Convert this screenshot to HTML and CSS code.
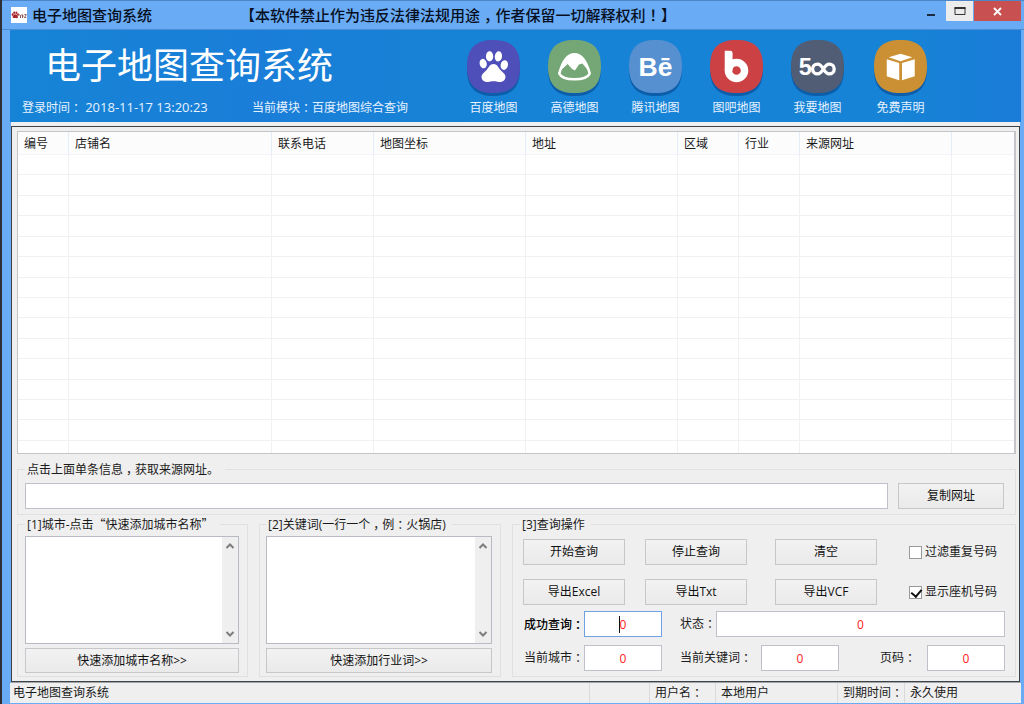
FILE: index.html
```html
<!DOCTYPE html>
<html lang="zh-CN">
<head>
<meta charset="utf-8">
<title>电子地图查询系统</title>
<link rel="stylesheet" href="styles.css">
</head>
<body>
<div class="window">
  <header class="titlebar">
    <svg class="app-icon" viewBox="0 0 16 16" aria-hidden="true">
      <rect width="16" height="16" fill="#fff"/>
      <g fill="#a8262b"><ellipse cx="1.600" cy="7.600" rx="1" ry="1.400"/><ellipse cx="3.200" cy="5.800" rx="1" ry="1.200"/><ellipse cx="5.400" cy="5.800" rx="1" ry="1.200"/><ellipse cx="7" cy="7.600" rx=".9" ry="1.300"/><path d="M4.300 7.300c1.600 0 3 2 2.600 3.200-.5 1-1.500.5-2.600.5s-2.200.4-2.600-.5C1.300 9.300 2.800 7.300 4.300 7.300z"/></g>
      <path d="M8.500 7.500l1 1.500 1-1.500M9.500 9v2M11.500 7.500V11M11.500 9h1.300M13.500 7.500h1.800l-1.800 3h1.800" fill="none" stroke="#8c4a45" stroke-width=".9"/>
    </svg>
    <span class="titlebar-name">电子地图查询系统</span>
    <span class="titlebar-note">【本软件禁止作为违反法律法规用途<span class="mid">，</span>作者保留一切解释权利<span class="mid">！</span>】</span>
    <div class="window-buttons">
      <button class="win-btn win-min" aria-label="最小化"><svg width="10" height="10" viewBox="0 0 10 10"><rect x="1" y="5" width="8" height="2" fill="#1c2b40"/></svg></button>
      <button class="win-btn win-max" aria-label="最大化"><svg width="12" height="10" viewBox="0 0 12 10"><path d="M1 1.500h10v7H1z" fill="none" stroke="#333" /><path d="M.5 1h11v2H.5z" fill="#333"/></svg></button>
      <button class="win-btn win-close" aria-label="关闭"><svg width="9" height="9" viewBox="0 0 9 9"><path d="M1 1l7 7M8 1L1 8" stroke="#fff" stroke-width="1.800"/></svg></button>
    </div>
  </header>

  <section class="banner">
    <div class="banner-info">
      <h1>电子地图查询系统</h1>
      <div class="banner-meta">
        <span class="meta-time">登录时间<span class="mid">：</span> <time>2018-11-17 13:20:23</time></span>
        <span>当前模块<span class="mid">：</span>百度地图综合查询</span>
      </div>
    </div>
    <nav class="modules">
      <button class="module">
        <svg viewBox="0 0 54 57" aria-hidden="true"><use href="#tile" y="3" fill="#0a4f97" opacity=".7"/><g fill="#4f4fb9"><use href="#tile"/></g>
          <defs><path id="tile" d="M27 0C45 0 54 8 54 27S45 54 27 54 0 46 0 27 9 0 27 0z"/></defs>
          <g fill="#fff"><ellipse cx="16.500" cy="24" rx="3.600" ry="4.900" transform="rotate(-14 16.500 24)"/><ellipse cx="23" cy="16.700" rx="3.700" ry="5.200"/><ellipse cx="32" cy="16.700" rx="3.700" ry="5.200" transform="rotate(8 32 16.700)"/><ellipse cx="38" cy="25.500" rx="3.700" ry="5" transform="rotate(14 38 25.500)"/><path d="M27 24.500c3.500 0 4.500 3 7 6 3 3 6 4.500 5 8.500-1 4-5 4-8 3.400-3-.6-5-.6-8 0-3.500.7-7 .4-8-3.400-.8-4 2-5.500 5-8.500 2.500-3 3.500-6 7-6z"/></g>
        </svg><span>百度地图</span></button>
      <button class="module">
        <svg viewBox="0 0 54 57" aria-hidden="true"><use href="#tile" y="3" fill="#0a4f97" opacity=".7"/><g fill="#75a676"><use href="#tile"/></g>
          <path d="M11.500 34C14 25 19 14.500 27 14.500S40 25 42.500 34C39 42 15 42 11.500 34z" fill="none" stroke="#fff" stroke-width="2.600" stroke-linejoin="round"/><path d="M13 31c4-11 8-16.500 14-16.500S37 20 41 31l-6-7-3.500 1-4 6-3-1.500-4.500-5z" fill="#fff"/>
        </svg><span>高德地图</span></button>
      <button class="module">
        <svg viewBox="0 0 54 57" aria-hidden="true"><use href="#tile" y="3" fill="#0a4f97" opacity=".7"/><g fill="#5690d0"><use href="#tile"/></g>
          <text x="27" y="37" text-anchor="middle" class="logo-text logo-be">Bē</text>
        </svg><span>腾讯地图</span></button>
      <button class="module">
        <svg viewBox="0 0 54 57" aria-hidden="true"><use href="#tile" y="3" fill="#0a4f97" opacity=".7"/><g fill="#cc4144"><use href="#tile"/></g>
          <path d="M15 11h5.500q2.500 0 2.500 2.500V31h-8z" fill="#fff"/><circle cx="27" cy="31" r="8.200" fill="none" stroke="#fff" stroke-width="7.600"/>
        </svg><span>图吧地图</span></button>
      <button class="module">
        <svg viewBox="0 0 54 57" aria-hidden="true"><use href="#tile" y="3" fill="#0a4f97" opacity=".7"/><g fill="#505d74"><use href="#tile"/></g>
          <text x="8" y="36" class="logo-text logo-five">5</text><path d="M33 29.500c-2-3.500-4-5-6-5a5 5 0 0 0 0 10c2 0 4-1.500 6-5s4-5 6-5a5 5 0 0 1 0 10c-2 0-4-1.500-6-5z" fill="none" stroke="#fff" stroke-width="3.400"/>
        </svg><span>我要地图</span></button>
      <button class="module module-notice">
        <svg viewBox="0 0 54 57" aria-hidden="true"><use href="#tile" y="3" fill="#0a4f97" opacity=".7"/><g fill="#cb9033"><use href="#tile"/></g>
          <g fill="#fff"><path d="M27 14l12 3.500L27 21.500 15 17.500z"/><path d="M13 19.500l12.700 4V41L13 37z"/><path d="M41.500 19.500l-13 4V41l13-4z"/></g>
        </svg><span>免费声明</span></button>
    </nav>
  </section>

  <main class="panel">
    <div class="list">
      <table>
        <colgroup><col class="c-no"><col class="c-shop"><col class="c-tel"><col class="c-wide"><col class="c-wide"><col class="c-small"><col class="c-small"><col class="c-wide"><col></colgroup>
        <thead><tr><th>编号</th><th>店铺名</th><th>联系电话</th><th>地图坐标</th><th>地址</th><th>区域</th><th>行业</th><th>来源网址</th><th></th></tr></thead>
        <tbody>
          <tr><td></td><td></td><td></td><td></td><td></td><td></td><td></td><td></td><td></td></tr>
          <tr><td></td><td></td><td></td><td></td><td></td><td></td><td></td><td></td><td></td></tr>
          <tr><td></td><td></td><td></td><td></td><td></td><td></td><td></td><td></td><td></td></tr>
          <tr><td></td><td></td><td></td><td></td><td></td><td></td><td></td><td></td><td></td></tr>
          <tr><td></td><td></td><td></td><td></td><td></td><td></td><td></td><td></td><td></td></tr>
          <tr><td></td><td></td><td></td><td></td><td></td><td></td><td></td><td></td><td></td></tr>
          <tr><td></td><td></td><td></td><td></td><td></td><td></td><td></td><td></td><td></td></tr>
          <tr><td></td><td></td><td></td><td></td><td></td><td></td><td></td><td></td><td></td></tr>
          <tr><td></td><td></td><td></td><td></td><td></td><td></td><td></td><td></td><td></td></tr>
          <tr><td></td><td></td><td></td><td></td><td></td><td></td><td></td><td></td><td></td></tr>
          <tr><td></td><td></td><td></td><td></td><td></td><td></td><td></td><td></td><td></td></tr>
          <tr><td></td><td></td><td></td><td></td><td></td><td></td><td></td><td></td><td></td></tr>
          <tr><td></td><td></td><td></td><td></td><td></td><td></td><td></td><td></td><td></td></tr>
          <tr><td></td><td></td><td></td><td></td><td></td><td></td><td></td><td></td><td></td></tr>
          <tr class="last-row"><td></td><td></td><td></td><td></td><td></td><td></td><td></td><td></td><td></td></tr>
        </tbody>
      </table>
    </div>

    <fieldset class="group group-url">
      <legend>点击上面单条信息<span class="mid">，</span>获取来源网址。</legend>
      <div class="url-row">
        <input class="field url-field" type="text" aria-label="来源网址">
        <button class="btn url-btn">复制网址</button>
      </div>
    </fieldset>

    <div class="groups">
      <fieldset class="group group-city">
        <legend>[1]城市-点击<span class="quote">“</span>快速添加城市名称<span class="quote">”</span></legend>
        <div class="memo">
          <textarea aria-label="城市"></textarea>
          <div class="scroll">
            <button aria-label="向上滚动"><svg viewBox="0 0 10 8"><path d="M1.500 6L5 2.500 8.500 6"/></svg></button>
            <button aria-label="向下滚动"><svg viewBox="0 0 10 8"><path d="M1.500 2L5 5.500 8.500 2"/></svg></button>
          </div>
        </div>
        <button class="btn btn-wide">快速添加城市名称&gt;&gt;</button>
      </fieldset>

      <fieldset class="group group-word">
        <legend>[2]关键词(一行一个<span class="mid">，</span>例<span class="mid">：</span>火锅店)</legend>
        <div class="memo">
          <textarea aria-label="关键词"></textarea>
          <div class="scroll">
            <button aria-label="向上滚动"><svg viewBox="0 0 10 8"><path d="M1.500 6L5 2.500 8.500 6"/></svg></button>
            <button aria-label="向下滚动"><svg viewBox="0 0 10 8"><path d="M1.500 2L5 5.500 8.500 2"/></svg></button>
          </div>
        </div>
        <button class="btn btn-wide">快速添加行业词&gt;&gt;</button>
      </fieldset>

      <fieldset class="group group-ops">
        <legend>[3]查询操作</legend>
        <div class="ops-row ops-first">
          <button class="btn">开始查询</button>
          <button class="btn">停止查询</button>
          <button class="btn btn-third">清空</button>
          <label class="check"><input type="checkbox">过滤重复号码</label>
        </div>
        <div class="ops-row">
          <button class="btn">导出Excel</button>
          <button class="btn">导出Txt</button>
          <button class="btn btn-third">导出VCF</button>
          <label class="check"><input type="checkbox" checked>显示座机号码</label>
        </div>
        <div class="stat-row stat-first">
          <label class="l-main strong" for="ok">成功查询<span class="mid">：</span></label>
          <div class="caret-box"><input class="field num active" id="ok" type="text" value="0"></div>
          <label class="l-status" for="status">状态<span class="mid">：</span></label>
          <input class="field status-field" id="status" type="text" value="0">
        </div>
        <div class="stat-row">
          <label class="l-main" for="city">当前城市<span class="mid">：</span></label>
          <input class="field num" id="city" type="text" value="0">
          <label class="l-word" for="word">当前关键词<span class="mid">：</span></label>
          <input class="field num" id="word" type="text" value="0">
          <label class="l-page" for="page">页码<span class="mid">：</span></label>
          <input class="field num" id="page" type="text" value="0">
        </div>
      </fieldset>
    </div>
  </main>

  <footer class="statusbar">
    <span class="cell s-name">电子地图查询系统</span>
    <span class="cell s-blank"></span>
    <span class="cell s-user">用户名<span class="mid">：</span></span>
    <span class="cell s-local">本地用户</span>
    <span class="cell s-due">到期时间<span class="mid">：</span></span>
    <span class="cell s-forever">永久使用</span>
  </footer>
</div>
</body>
</html>
```

FILE: styles.css
```css
* { box-sizing: border-box; }
body {
  margin: 0;
  font: 12px/18px "Open Sans", "Noto Sans CJK SC", sans-serif;
  color: #1a1a1a;
}
button, input, textarea { font: inherit; color: inherit; margin: 0; border-radius: 0; }
button { padding: 0; border: 0; background: none; }
/* full-width punctuation centred in its cell: half-width form with even padding */
.mid { padding: 0 3px; font-feature-settings: "halt"; }
.titlebar .mid { padding: 0 4px; }
.quote { font-family: "Noto Sans CJK SC", sans-serif; line-height: 1; }

.window {
  display: flex;
  flex-direction: column;
  min-height: 100vh;
  padding: 0 3px 1px 8px;
  border-left: 2px solid #2d3036;
  background: #6aabf6;
}

/* title bar */
.titlebar {
  display: flex;
  align-items: center;
  height: 30px;
  margin-left: -8px;
  margin-right: -3px;
  padding: 0 3px 0 9px;
  border-top: 1px solid #4c86c8;
  border-bottom: 1px solid #4c8cd4;
  font: 500 15px/20px "Noto Sans CJK SC", sans-serif;
  color: #06101e;
  white-space: nowrap;
}
.app-icon { width: 16px; height: 16px; margin-right: 5px; }
.titlebar-name { width: 208px; }
.titlebar-note { flex: 1; }
.window-buttons { display: flex; align-self: flex-start; gap: 1px; }
.win-btn { display: flex; align-items: center; justify-content: center; height: 20px; }
.win-min { width: 28px; height: 26px; }
.win-max { width: 27px; background: #ececec; }
.win-close { width: 47px; background: #c85051; }

/* banner */
.banner {
  display: flex;
  height: 92px;
  flex: none;
  background: linear-gradient(90deg, #1684d6, #1a7ed8 25%, #1683d6 45%, #1683d6 88%, #1a7cd8);
  color: #e6f2ff;
}
.banner-info { width: 443px; }
.banner h1 {
  margin: 7px 0 10px 35px;
  font: 400 36px/52px "Noto Sans CJK SC", sans-serif;
  color: #fff;
}
.banner-meta { display: flex; padding-left: 12px; white-space: nowrap; }
.banner-meta time { font-size: 13px; line-height: 16px; }
.meta-time { width: 230px; }
.modules { display: flex; }
.module {
  display: flex;
  flex-direction: column;
  align-items: center;
  width: 81px;
  padding-top: 10px;
}
.module svg { width: 53px; height: 56px; margin-bottom: 3px; }
.module-notice { margin-left: 2px; }
.logo-text { fill: #fff; font-weight: 700; }
.logo-be { font-family: "Liberation Sans", sans-serif; font-size: 27px; }
.logo-five { font-family: "Liberation Sans", sans-serif; font-size: 24px; }

/* main panel */
.panel {
  display: flex;
  flex: 1;
  flex-direction: column;
  margin: 4px 1px 0;
  padding: 4px 3px 4px 5px;
  border: 1px solid #3d434a;
  background: #efefef;
  box-shadow: 0 -4px #efefef, 0 1px #a5a5a5;
}
.list {
  display: flex;
  flex: 1;
  min-height: 200px;
  border: 1px solid #c3c5c9;
  border-right-width: 2px;
  background: #fff;
}
.list table { width: 100%; border-spacing: 0; table-layout: fixed; }
.c-no { width: 51px; }
.c-shop { width: 203px; }
.c-tel { width: 102px; }
.c-wide { width: 152px; }
.c-small { width: 61px; }
.list th {
  height: 23px;
  padding: 1px 6px 0;
  border-right: 1px solid #e4eef8;
  border-bottom: 1px solid #f2f4f7;
  background: #fcfcfc;
  font-weight: 400;
  text-align: left;
}
.list td { padding: 0; border-right: 1px solid #f1f1f3; border-bottom: 1px solid #f1f1f3; }
.list th:last-child, .list td:last-child { border-right: 0; }
.last-row { height: 12px; }
.last-row td { border-bottom: 0; }

/* group boxes */
.group { min-width: 0; margin: 0; border: 1px solid #e0e0e0; }
.group legend { height: 16px; padding: 0 6px 0 2px; white-space: nowrap; }
.group-url { margin-top: 7px; padding: 6px 11px 5px 7px; }
.url-row { display: flex; gap: 10px; }
.url-field { flex: 1; min-width: 0; }
.url-btn { width: 106px; }
.groups {
  display: grid;
  grid-template-columns: minmax(0, 231fr) minmax(0, 242fr) minmax(0, 504fr);
  gap: 11px;
  margin-top: 1px;
}
.group-city { padding: 4px 8px 3px 7px; }
.group-word { padding: 4px 8px 3px 6px; }
.group-ops { padding: 7px 10px 4px; }
.group-ops legend { margin-left: -3px; }

.field {
  height: 26px;
  padding: 0 4px;
  border: 1px solid #bfc1c8;
  background: #fff;
  outline: 0;
}
.btn {
  height: 26px;
  border: 1px solid #c6c7ca;
  background: linear-gradient(#f2f2f2, #eaeaea);
  color: #111;
  white-space: nowrap;
}
.btn-wide { display: block; width: 100%; height: 25px; margin-top: 4px; }

.memo { display: flex; height: 108px; border: 1px solid #b9bbc3; background: #fff; }
.memo textarea { flex: 1; min-width: 0; border: 0; resize: none; outline: 0; overflow: hidden; background: #fff; }
.scroll { display: flex; flex-direction: column; justify-content: space-between; width: 16px; background: #efefef; }
.scroll button { display: flex; align-items: center; justify-content: center; height: 18px; }
.scroll svg { width: 10px; height: 8px; fill: none; stroke: #7d7d7d; stroke-width: 2; }

.ops-row { display: flex; align-items: center; gap: 20px; }
.ops-first { margin-bottom: 14px; }
.ops-row .btn { flex: 1 1 0; }
.ops-row .btn-third { margin-left: 8px; }
.check { display: flex; align-items: center; gap: 3px; width: 96px; margin-left: 12px; white-space: nowrap; }
.check input {
  appearance: none;
  flex: none;
  width: 13px;
  height: 13px;
  border: 1px solid #9a9a9a;
  background: #fff;
}
.check input:checked::before {
  content: "";
  display: block;
  width: 5px;
  height: 8px;
  margin-left: 3px;
  border: solid #111;
  border-width: 0 2px 2px 0;
  transform: rotate(40deg);
}

.stat-row { display: flex; align-items: center; margin-top: 8px; }
.stat-first { margin-top: 6px; }
.stat-row label { flex: none; white-space: nowrap; }
.stat-row .field { color: #ff2020; text-align: center; }
.num { width: 78px; }
.l-main { width: 61px; padding-left: 1px; }
.l-status { margin-left: 18px; width: 36px; }
.l-word { margin-left: 18px; width: 81px; }
.l-page { margin-left: auto; width: 47px; }
.stat-row .strong { font-family: "Noto Sans CJK SC", sans-serif; font-weight: 500; color: #000; }
.status-field { flex: 1; min-width: 0; }
.caret-box { position: relative; }
.caret-box::after {
  content: "";
  position: absolute;
  top: 5px;
  left: 35px;
  width: 1px;
  height: 17px;
  background: #111;
}
.stat-row .active { display: block; border-color: #6ea2e4; }

/* status bar */
.statusbar { display: flex; height: 20px; margin-top: 1px; background: #efefef; line-height: 20px; white-space: nowrap; }
.cell { padding-left: 5px; border-left: 1px solid #dadada; }
.s-name { flex: 1; padding-left: 3px; border-left: 0; }
.s-blank { width: 60px; }
.s-user { width: 66px; }
.s-local { width: 122px; }
.s-due { width: 67px; }
.s-forever { width: 117px; }
```
